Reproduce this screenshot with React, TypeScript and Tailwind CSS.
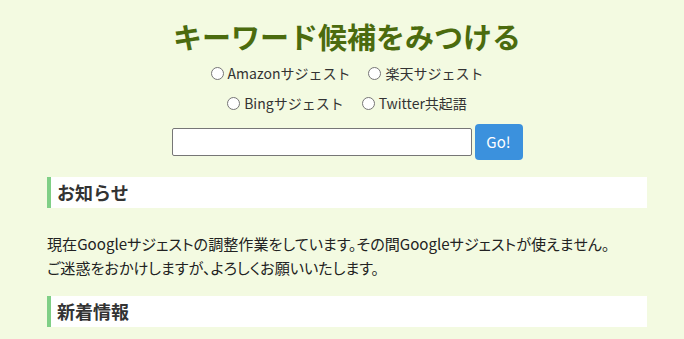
const font = { fontFamily: '"Noto Sans CJK JP", "Noto Sans", sans-serif' };

function Radio({ label }: { label: string }) {
  return (
    <label className="flex items-center gap-[4px] text-[14px] text-[#333]">
      <span className="w-[13px] h-[13px] rounded-full border border-[#767676] bg-white inline-block" />
      {label}
    </label>
  );
}

function SectionHead({ title }: { title: string }) {
  return (
    <h2 className="bg-white border-l-[4px] border-[#7fcf86] h-[31px] pl-[6px] flex items-center text-[18px] font-bold text-[#333]">
      {title}
    </h2>
  );
}

export default function App() {
  return (
    <div className="min-h-[339px] bg-[#f3fae1] pl-[10px] pt-[14px]" style={font}>
      <div className="w-[600px] mx-auto">
        <h1 className="text-center text-[29px] font-bold text-[#4b6b0e] leading-[44px]">
          キーワード候補をみつける
        </h1>
        <div className="flex justify-center gap-[18px] mt-[6px] h-[18px] items-center">
          <Radio label="Amazonサジェスト" />
          <Radio label="楽天サジェスト" />
        </div>
        <div className="flex justify-center gap-[18px] mt-[12px] h-[18px] items-center">
          <Radio label="Bingサジェスト" />
          <Radio label="Twitter共起語" />
        </div>
        <div className="flex justify-center items-center gap-[3px] mt-[12px]">
          <input className="w-[300px] h-[28px] bg-white border border-[#767676] rounded-[2px]" />
          <button className="w-[48px] h-[36px] rounded-[4px] bg-[#3b91dd] text-white text-[15px]">Go!</button>
        </div>
        <div className="mt-[17px]">
          <SectionHead title="お知らせ" />
        </div>
        <p className="mt-[23px] text-[15.1px] leading-[24px] text-[#222] [font-feature-settings:'palt']">
          現在Googleサジェストの調整作業をしています。その間Googleサジェストが使えません。
          <br />
          ご迷惑をおかけしますが、よろしくお願いいたします。
        </p>
        <div className="mt-[17px]">
          <SectionHead title="新着情報" />
        </div>
      </div>
    </div>
  );
}
